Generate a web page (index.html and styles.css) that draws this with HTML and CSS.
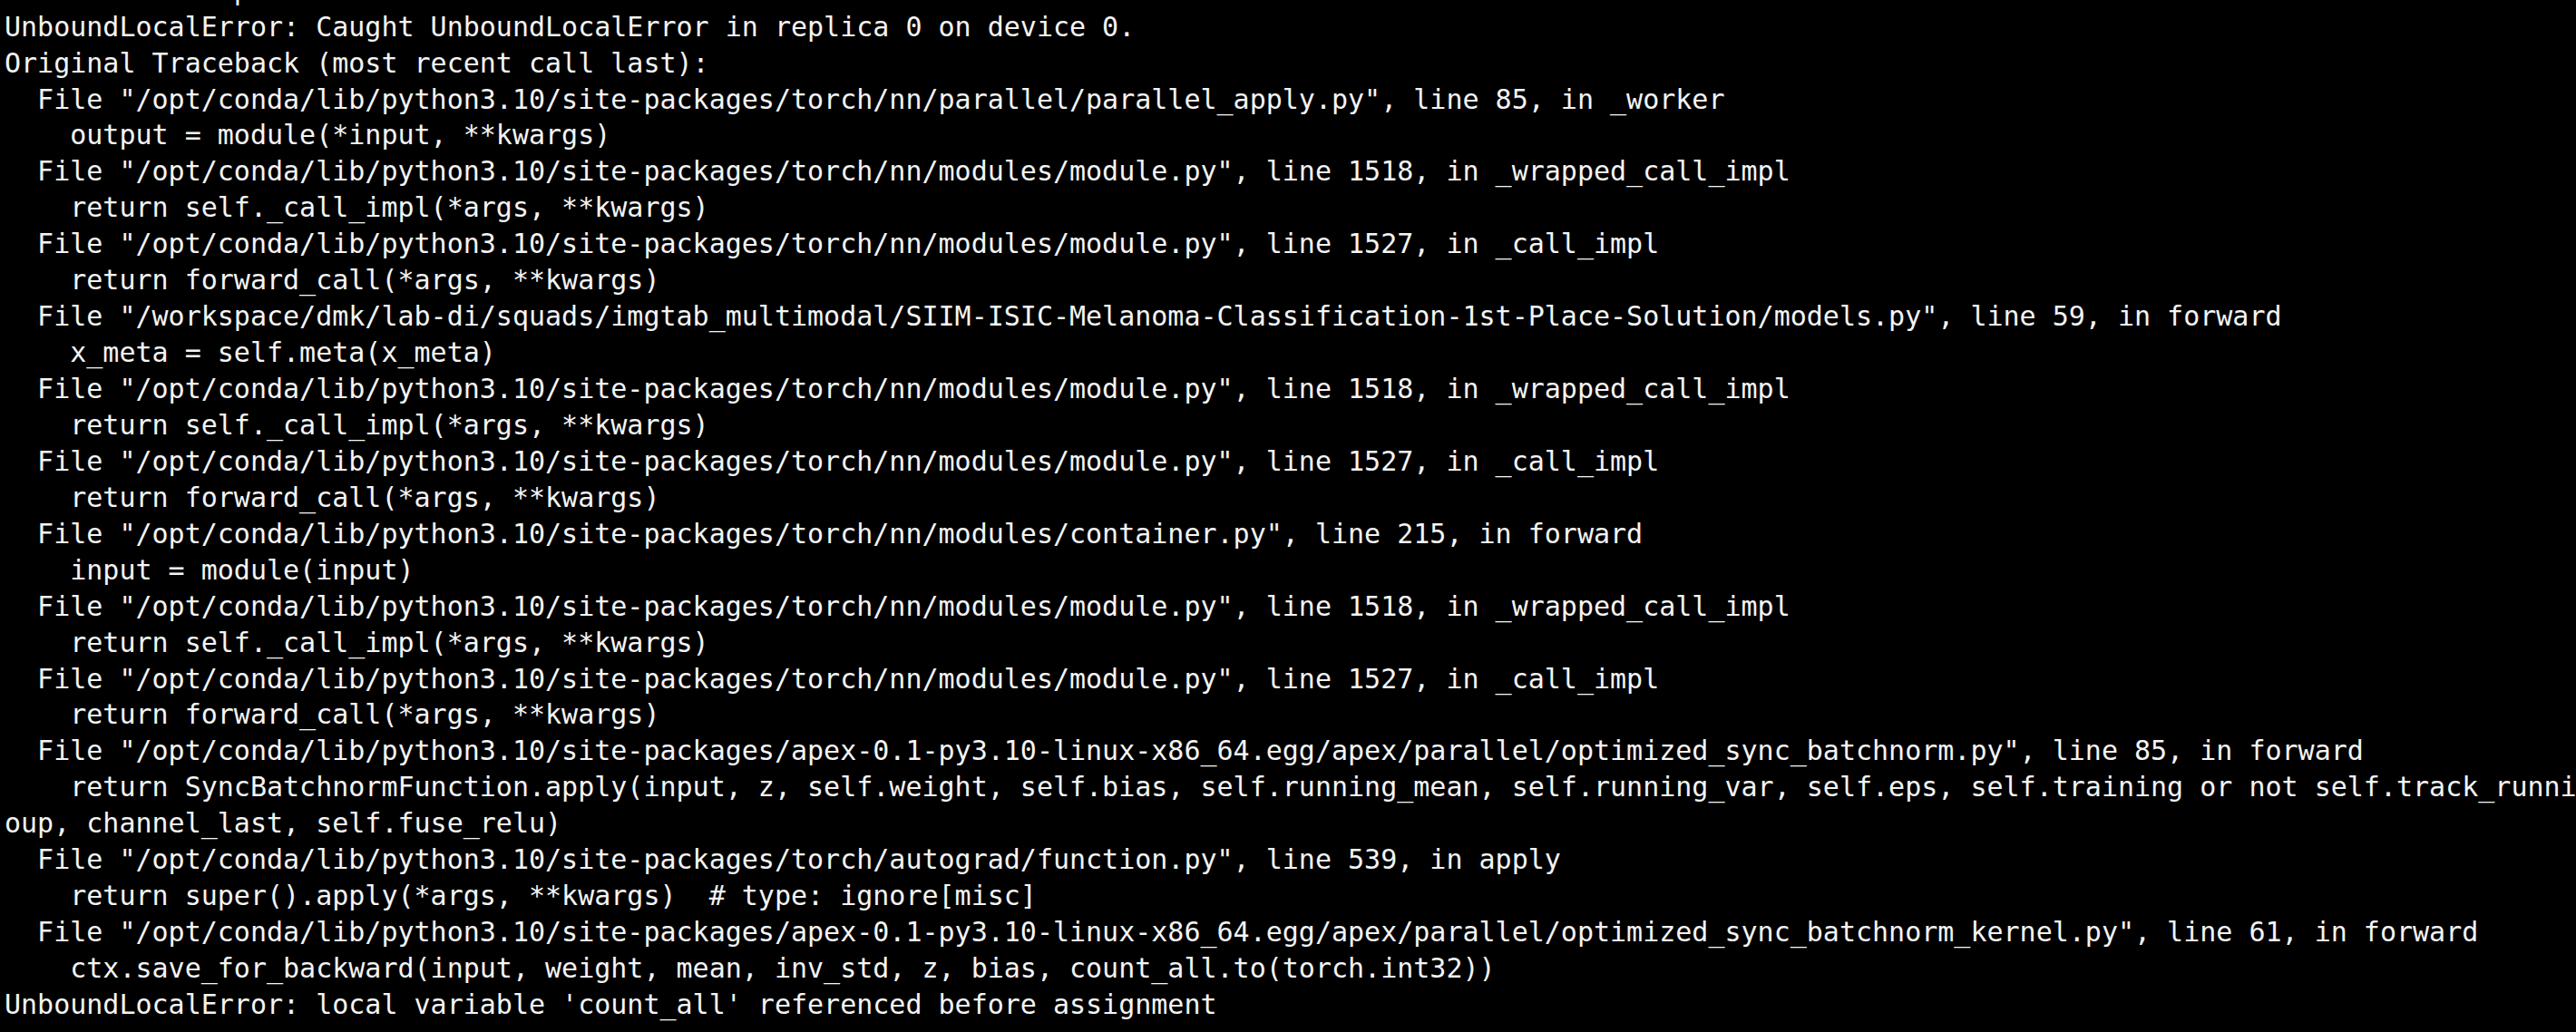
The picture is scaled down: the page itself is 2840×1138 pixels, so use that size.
FILE: index.html
```html
<!DOCTYPE html>
<html lang="en">
<head>
<meta charset="utf-8">
<title>Traceback</title>
<link rel="stylesheet" href="styles.css">
</head>
<body>
<pre class="term">    raise exception
UnboundLocalError: Caught UnboundLocalError in replica 0 on device 0.
Original Traceback (most recent call last):
  File "/opt/conda/lib/python3.10/site-packages/torch/nn/parallel/parallel_apply.py", line 85, in _worker
    output = module(*input, **kwargs)
  File "/opt/conda/lib/python3.10/site-packages/torch/nn/modules/module.py", line 1518, in _wrapped_call_impl
    return self._call_impl(*args, **kwargs)
  File "/opt/conda/lib/python3.10/site-packages/torch/nn/modules/module.py", line 1527, in _call_impl
    return forward_call(*args, **kwargs)
  File "/workspace/dmk/lab-di/squads/imgtab_multimodal/SIIM-ISIC-Melanoma-Classification-1st-Place-Solution/models.py", line 59, in forward
    x_meta = self.meta(x_meta)
  File "/opt/conda/lib/python3.10/site-packages/torch/nn/modules/module.py", line 1518, in _wrapped_call_impl
    return self._call_impl(*args, **kwargs)
  File "/opt/conda/lib/python3.10/site-packages/torch/nn/modules/module.py", line 1527, in _call_impl
    return forward_call(*args, **kwargs)
  File "/opt/conda/lib/python3.10/site-packages/torch/nn/modules/container.py", line 215, in forward
    input = module(input)
  File "/opt/conda/lib/python3.10/site-packages/torch/nn/modules/module.py", line 1518, in _wrapped_call_impl
    return self._call_impl(*args, **kwargs)
  File "/opt/conda/lib/python3.10/site-packages/torch/nn/modules/module.py", line 1527, in _call_impl
    return forward_call(*args, **kwargs)
  File "/opt/conda/lib/python3.10/site-packages/apex-0.1-py3.10-linux-x86_64.egg/apex/parallel/optimized_sync_batchnorm.py", line 85, in forward
    return SyncBatchnormFunction.apply(input, z, self.weight, self.bias, self.running_mean, self.running_var, self.eps, self.training or not self.track_running_stats, self.momentum, self.process_gr
oup, channel_last, self.fuse_relu)
  File "/opt/conda/lib/python3.10/site-packages/torch/autograd/function.py", line 539, in apply
    return super().apply(*args, **kwargs)  # type: ignore[misc]
  File "/opt/conda/lib/python3.10/site-packages/apex-0.1-py3.10-linux-x86_64.egg/apex/parallel/optimized_sync_batchnorm_kernel.py", line 61, in forward
    ctx.save_for_backward(input, weight, mean, inv_std, z, bias, count_all.to(torch.int32))
UnboundLocalError: local variable 'count_all' referenced before assignment</pre>
</body>
</html>
```
FILE: styles.css
```css
html, body {
  margin: 0;
  padding: 0;
  background: #000;
  overflow: hidden;
  width: 2840px;
  height: 1138px;
}

.term {
  margin: -30.3px 0 0 0;
  padding: 0 0 0 5px;
  font-family: "DejaVu Sans Mono", "Liberation Mono", monospace;
  font-size: 30px;
  line-height: 39.93px;
  color: #f4f4f4;
  white-space: pre;
  overflow: hidden;
}
```
